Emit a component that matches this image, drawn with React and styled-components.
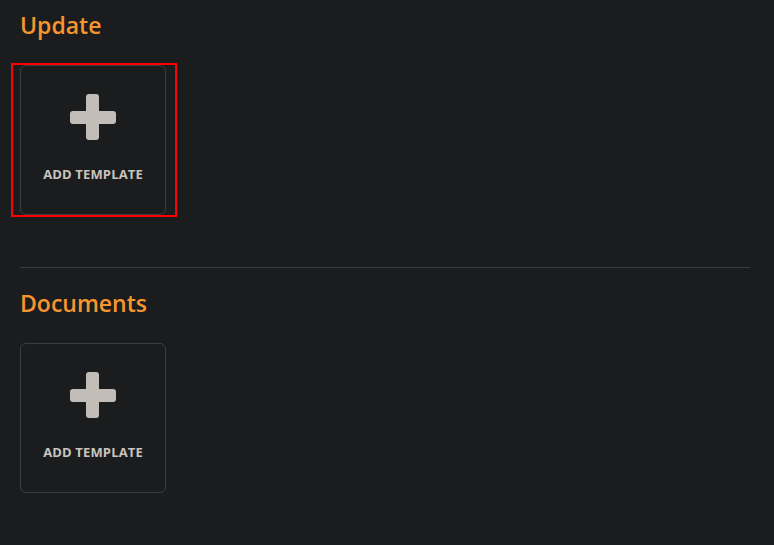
import React from 'react'
import styled, { createGlobalStyle } from 'styled-components'

const Global = createGlobalStyle`
  html, body {
    margin: 0;
    background: #1b1c1e;
    font-family: "Open Sans", "Noto Sans", sans-serif;
  }
`;

const Page = styled.div`
  padding: 10px 24px 40px 20px;
`;

const Section = styled.section`
  display: flex;
  flex-direction: column;
`;

const Title = styled.h2`
  margin: 0 0 25px;
  font-size: 23px;
  line-height: 30px;
  font-weight: 600;
  color: #f7952e;
`;

const Divider = styled.hr`
  border: 0;
  border-top: 1px solid #3b3c3e;
  margin: 52px 0 20px;
`;

const CardSlot = styled.div`
  position: relative;
  width: 146px;
`;

const Selected = styled.div`
  position: absolute;
  top: -2px;
  left: -9px;
  right: -11px;
  bottom: -2px;
  border: 2px solid #f00;
  pointer-events: none;
`;

const Card = styled.button`
  box-sizing: border-box;
  width: 146px;
  height: 150px;
  padding: 28px 0 0;
  display: flex;
  flex-direction: column;
  align-items: center;
  background: transparent;
  border: 1px solid #3d3e40;
  border-radius: 6px;
  cursor: pointer;
  font-family: inherit;
`;

const Label = styled.span`
  margin-top: 25px;
  font-size: 13px;
  line-height: 18px;
  font-weight: 700;
  letter-spacing: 0.15px;
  color: #c9c4be;
`;

const Plus = () => (
  <svg width="46" height="46" viewBox="0 0 46 46">
    <rect x="16" y="0" width="13" height="46" rx="3" fill="#c2bdb7" />
    <rect x="0" y="17" width="46" height="13" rx="3" fill="#c2bdb7" />
  </svg>
)

const AddTemplate = ({ selected }) => (
  <CardSlot>
    <Card>
      <Plus />
      <Label>ADD TEMPLATE</Label>
    </Card>
    {selected && <Selected />}
  </CardSlot>
)

export default function App() {
  return (
    <Page>
      <Global />
      <Section>
        <Title>Update</Title>
        <AddTemplate selected />
      </Section>
      <Divider />
      <Section>
        <Title>Documents</Title>
        <AddTemplate />
      </Section>
    </Page>
  )
}
